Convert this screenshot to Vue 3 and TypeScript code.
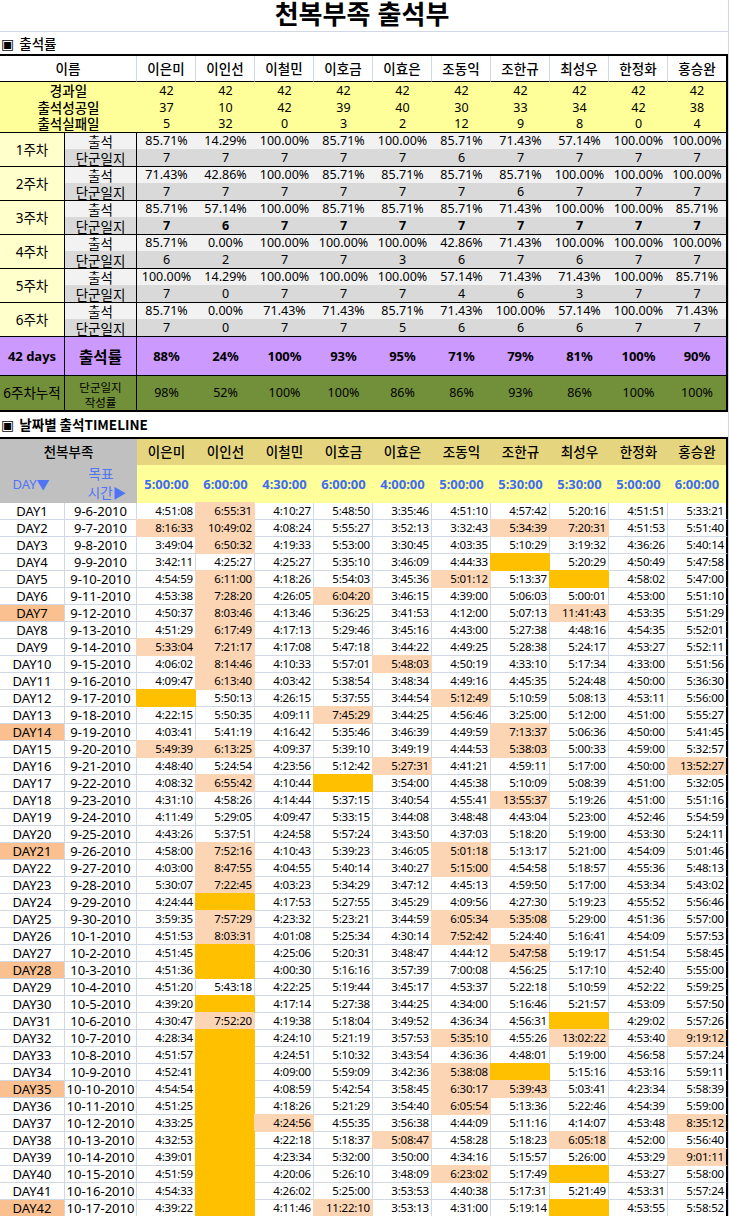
<script setup lang="ts">
interface Week { label: string; rate: string[]; days: string[]; bold?: boolean }
interface TimeCell { text: string; kind: string }
interface DayRow { day: string; date: string; rest: boolean; cells: TimeCell[] }

const names: string[] = ['이은미', '이인선', '이철민', '이호금', '이효은', '조동익', '조한규', '최성우', '한정화', '홍승완']
const elapsed: string[] = names.map(() => '42')
const success: string[] = ['37', '10', '42', '39', '40', '30', '33', '34', '42', '38']
const failed: string[] = ['5', '32', '0', '3', '2', '12', '9', '8', '0', '4']
const yellowRows = [
  { label: '경과일', values: elapsed },
  { label: '출석성공일', values: success },
  { label: '출석실패일', values: failed },
]
const pct = (s: string): string[] => s.split(' ').map((v) => (v === '100' ? '100.00%' : v + '%'))
const weeks: Week[] = [
  { label: '1주차', rate: pct('85.71 14.29 100 85.71 100 85.71 71.43 57.14 100 100'), days: '7 7 7 7 7 6 7 7 7 7'.split(' ') },
  { label: '2주차', rate: pct('71.43 42.86 100 85.71 85.71 85.71 85.71 100 100 100'), days: '7 7 7 7 7 7 6 7 7 7'.split(' ') },
  { label: '3주차', rate: pct('85.71 57.14 100 85.71 85.71 85.71 71.43 100 100 85.71'), days: '7 6 7 7 7 7 7 7 7 7'.split(' '), bold: true },
  { label: '4주차', rate: pct('85.71 0.00 100 100 100 42.86 71.43 100 100 100'), days: '6 2 7 7 3 6 7 6 7 7'.split(' ') },
  { label: '5주차', rate: pct('100 14.29 100 100 100 57.14 71.43 71.43 100 85.71'), days: '7 0 7 7 7 4 6 3 7 7'.split(' ') },
  { label: '6주차', rate: pct('85.71 0.00 71.43 71.43 85.71 71.43 100 57.14 100 71.43'), days: '7 0 7 7 5 6 6 6 7 7'.split(' ') },
]
const totals: string[] = ['88%', '24%', '100%', '93%', '95%', '71%', '79%', '81%', '100%', '90%']
const logs: string[] = ['98%', '52%', '100%', '100%', '86%', '86%', '93%', '86%', '100%', '100%']
const targets: string[] = ['5:00:00', '6:00:00', '4:30:00', '6:00:00', '4:00:00', '5:00:00', '5:30:00', '5:30:00', '5:00:00', '6:00:00']

const raw: string = `4:51:08 *6:55:31 4:10:27 5:48:50 3:35:46 4:51:10 4:57:42 5:20:16 4:51:51 5:33:21
*8:16:33 *10:49:02 4:08:24 5:55:27 3:52:13 3:32:43 *5:34:39 *7:20:31 4:51:53 5:51:40
3:49:04 *6:50:32 4:19:33 5:53:00 3:30:45 4:03:35 5:10:29 3:19:32 4:36:26 5:40:14
3:42:11 4:25:27 4:25:27 5:35:10 3:46:09 4:44:33 - 5:20:29 4:50:49 5:47:58
4:54:59 *6:11:00 4:18:26 5:54:03 3:45:36 *5:01:12 5:13:37 - 4:58:02 5:47:00
4:53:38 *7:28:20 4:26:05 *6:04:20 3:46:15 4:39:00 5:06:03 5:00:01 4:53:00 5:51:10
4:50:37 *8:03:46 4:13:46 5:36:25 3:41:53 4:12:00 5:07:13 *11:41:43 4:53:35 5:51:29
4:51:29 *6:17:49 4:17:13 5:29:46 3:45:16 4:43:00 5:27:38 4:48:16 4:54:35 5:52:01
*5:33:04 *7:21:17 4:17:08 5:47:18 3:44:22 4:49:25 5:28:38 5:24:17 4:53:27 5:52:11
4:06:02 *8:14:46 4:10:33 5:57:01 *5:48:03 4:50:19 4:33:10 5:17:34 4:33:00 5:51:56
4:09:47 *6:13:40 4:03:42 5:38:54 3:48:34 4:49:16 4:45:35 5:24:48 4:50:00 5:36:30
- 5:50:13 4:26:15 5:37:55 3:44:54 *5:12:49 5:10:59 5:08:13 4:53:11 5:56:00
4:22:15 5:50:35 4:09:11 *7:45:29 3:44:25 4:56:46 3:25:00 5:12:00 4:51:00 5:55:27
4:03:41 5:41:19 4:16:42 5:35:46 3:46:39 4:49:59 *7:13:37 5:06:36 4:50:00 5:41:45
*5:49:39 *6:13:25 4:09:37 5:39:10 3:49:19 4:44:53 *5:38:03 5:00:33 4:59:00 5:32:57
4:48:40 5:24:54 4:23:56 5:12:42 *5:27:31 4:41:21 4:59:11 5:17:00 4:50:00 *13:52:27
4:08:32 *6:55:42 4:10:44 - 3:54:00 4:45:38 5:10:09 5:08:39 4:51:00 5:32:05
4:31:10 4:58:26 4:14:44 5:37:15 3:40:54 4:55:41 *13:55:37 5:19:26 4:51:00 5:51:16
4:11:49 5:29:05 4:09:47 5:33:15 3:44:08 3:48:48 4:43:04 5:23:00 4:52:46 5:54:59
4:43:26 5:37:51 4:24:58 5:57:24 3:43:50 4:37:03 5:18:20 5:19:00 4:53:30 5:24:11
4:58:00 *7:52:16 4:10:43 5:39:23 3:46:05 *5:01:18 5:13:17 5:21:00 4:54:09 5:01:46
4:03:00 *8:47:55 4:04:55 5:40:14 3:40:27 *5:15:00 4:54:58 5:18:57 4:55:36 5:48:13
5:30:07 *7:22:45 4:03:23 5:34:29 3:47:12 4:45:13 4:59:50 5:17:00 4:53:34 5:43:02
4:24:44 - 4:17:53 5:27:55 3:45:29 4:09:56 4:27:30 5:19:23 4:55:52 5:56:46
3:59:35 *7:57:29 4:23:32 5:23:21 3:44:59 *6:05:34 *5:35:08 5:29:00 4:51:36 5:57:00
4:51:53 *8:03:31 4:01:08 5:25:34 4:30:14 *7:52:42 5:24:40 5:16:41 4:54:09 5:57:53
4:51:45 - 4:25:06 5:20:31 3:48:47 4:44:12 *5:47:58 5:19:17 4:51:54 5:58:45
4:51:36 - 4:00:30 5:16:16 3:57:39 7:00:08 4:56:25 5:17:10 4:52:40 5:55:00
4:51:20 5:43:18 4:22:25 5:19:44 3:45:17 4:53:37 5:22:18 5:10:59 4:52:22 5:59:25
4:39:20 - 4:17:14 5:27:38 3:44:25 4:34:00 5:16:46 5:21:57 4:53:09 5:57:50
4:30:47 *7:52:20 4:19:38 5:18:04 3:49:52 4:36:34 4:56:31 - 4:29:02 5:57:26
4:28:34 - 4:24:10 5:21:19 3:57:53 *5:35:10 4:55:26 *13:02:22 4:53:40 *9:19:12
4:51:57 - 4:24:51 5:10:32 3:43:54 4:36:36 4:48:01 5:19:00 4:56:58 5:57:24
4:52:41 - 4:09:00 5:59:09 3:42:36 *5:38:08 - 5:15:16 4:53:16 5:59:11
4:54:54 - 4:08:59 5:42:54 3:58:45 *6:30:17 *5:39:43 5:03:41 4:23:34 5:58:39
4:51:25 - 4:18:26 5:21:29 3:54:40 *6:05:54 5:13:36 5:22:46 4:54:39 5:59:00
4:33:25 - *4:24:56 4:55:35 3:56:38 4:44:09 5:11:16 4:14:07 4:53:48 *8:35:12
4:32:53 - 4:22:18 5:18:37 *5:08:47 4:58:28 5:18:23 *6:05:18 4:52:00 5:56:40
4:39:01 - 4:23:34 5:32:00 3:50:00 4:34:16 5:15:57 5:26:00 4:53:29 *9:01:11
4:51:59 - 4:20:06 5:26:10 3:48:09 *6:23:02 5:17:49 - 4:53:27 5:58:00
4:54:33 - 4:26:02 5:25:00 3:53:53 4:40:38 5:17:31 5:21:49 4:53:31 5:57:24
4:39:22 - 4:11:46 *11:22:10 3:53:13 4:31:00 5:19:14 - 4:53:55 5:58:52`

const dateOf = (i: number): string => (i < 25 ? `9-${i + 6}-2010` : `10-${i - 24}-2010`)
const parseCell = (s: string): TimeCell => {
  if (s === '-') return { text: '', kind: 'missed' }
  if (s.startsWith('*')) return { text: s.slice(1), kind: 'late' }
  return { text: s, kind: '' }
}
const rows: DayRow[] = raw.split('\n').map((line, i) => ({
  day: `DAY${i + 1}`,
  date: dateOf(i),
  rest: (i + 1) % 7 === 0,
  cells: line.trim().split(' ').map(parseCell),
}))
</script>

<template>
  <div class="sheet">
    <h1 class="title">천복부족 출석부</h1>
    <h2 class="section"><span class="mark">▣</span> 출석률</h2>

    <table class="grid summary">
      <colgroup>
        <col class="c-a" /><col class="c-b" />
        <col v-for="n in names" :key="n" class="c-n" />
      </colgroup>
      <tbody>
        <tr class="r-head">
          <td colspan="2" class="name">이름</td>
          <td v-for="n in names" :key="n" class="name">{{ n }}</td>
        </tr>
        <tr v-for="(y, yi) in yellowRows" :key="y.label" class="r-y" :class="{ end: yi === 2 }">
          <td colspan="2" class="ylabel">{{ y.label }}</td>
          <td v-for="(v, i) in y.values" :key="i" class="num">{{ v }}</td>
        </tr>
        <template v-for="w in weeks" :key="w.label">
          <tr class="r-rate">
            <td rowspan="2" class="wk">{{ w.label }}</td>
            <td class="sub">출석</td>
            <td v-for="(v, i) in w.rate" :key="i" class="num">{{ v }}</td>
          </tr>
          <tr class="r-days" :class="{ strong: w.bold }">
            <td class="sub">단군일지</td>
            <td v-for="(v, i) in w.days" :key="i" class="num">{{ v }}</td>
          </tr>
        </template>
        <tr class="r-total">
          <td class="total-a">42 days</td>
          <td class="total-b">출석률</td>
          <td v-for="(v, i) in totals" :key="i" class="num">{{ v }}</td>
        </tr>
        <tr class="r-log">
          <td class="log-a">6주차누적</td>
          <td class="log-b">단군일지<br />작성률</td>
          <td v-for="(v, i) in logs" :key="i" class="num">{{ v }}</td>
        </tr>
      </tbody>
    </table>

    <h2 class="section second"><span class="mark">▣</span> 날짜별 출석TIMELINE</h2>

    <table class="grid timeline">
      <colgroup>
        <col class="c-a" /><col class="c-b" />
        <col v-for="n in names" :key="n" class="c-n" />
      </colgroup>
      <tbody>
        <tr class="t-head">
          <td colspan="2" class="clan">천복부족</td>
          <td v-for="n in names" :key="n" class="name">{{ n }}</td>
        </tr>
        <tr class="t-goal">
          <td class="gray blue day-label">DAY▼</td>
          <td class="gray blue goal-label">목표<br /><span class="goal-time">시간▶</span></td>
          <td v-for="(t, i) in targets" :key="i" class="goal">{{ t }}</td>
        </tr>
        <tr v-for="r in rows" :key="r.day" class="t-row">
          <td class="day" :class="{ rest: r.rest }">{{ r.day }}</td>
          <td class="date">{{ r.date }}</td>
          <td v-for="(c, i) in r.cells" :key="i" class="time" :class="c.kind">{{ c.text }}</td>
        </tr>
      </tbody>
    </table>
  </div>
</template>

<style>
html, body { margin: 0; background: #fff; }
</style>

<style scoped>
.sheet {
  width: 729px;
  height: 1216px;
  overflow: hidden;
  box-sizing: border-box;
  border-right: 1px solid #d0d7e5;
  font-family: "Noto Sans", "Noto Sans CJK KR", sans-serif;
  color: #000;
  background: #fff;
}
.title {
  margin: 0;
  height: 32px;
  box-sizing: border-box;
  border-bottom: 1px solid #d0d7e5;
  font-family: "Liberation Sans", "Noto Sans CJK KR", sans-serif;
  font-size: 26px;
  font-weight: 700;
  line-height: 30px;
  text-align: center;
  padding-right: 4px;
}
.section {
  margin: 0;
  height: 22px;
  padding-left: 1px;
  font-family: "Noto Sans CJK KR", sans-serif;
  font-size: 13.5px;
  font-weight: 500;
  line-height: 22px;
  white-space: nowrap;
}
.section.second { height: 25px; line-height: 25px; font-weight: 700; }
.mark { font-family: "DejaVu Sans", sans-serif; font-size: 14px; font-weight: 400; margin-right: 2px; }

.grid {
  width: 728px;
  table-layout: fixed;
  border-collapse: separate;
  border-spacing: 0;
  border-top: 2px solid #000;
}
.c-a { width: 65px; }
.c-b { width: 72px; }
.c-n { width: 59px; }
.c-n:last-child { width: 60px; }
.grid td {
  box-sizing: border-box;
  padding: 0;
  text-align: center;
  vertical-align: middle;
  font-size: 12.5px;
  line-height: 16px;
  white-space: nowrap;
}
.grid tr td:last-child { border-right: 2px solid #000; }

.name { font-size: 13.5px !important; font-weight: 500; }
.r-head td { height: 26px; border-right: 1px solid #d0d7e5; border-bottom: 1px solid #000; }

.r-y td { height: 17px; background: #ffff99; }
.r-y.end td { border-bottom: 1px solid #000; }
.ylabel { font-size: 13.5px !important; font-weight: 500; }

.r-rate td.num { height: 16px; background: #f2f2f2; }
.r-days td.num { height: 18px; background: #d9d9d9; vertical-align: bottom; border-bottom: 1px solid #000; }
.r-days.strong td.num { font-weight: 700; }
.r-total td, .r-log td { border-bottom: 1px solid #000; }
.sub {
  font-size: 13.5px !important;
  border-right: 1px solid #000;
}
.r-rate .sub { height: 16px; background: #f2f2f2; padding-top: 3px; line-height: 13px; }
.r-days .sub { height: 18px; background: #d9d9d9; padding-top: 3px; line-height: 14px; border-bottom: 1px solid #000; }
.wk {
  background: #ffffcc;
  font-size: 13.5px !important;
  border-right: 1px solid #000;
  border-bottom: 1px solid #000;
}

.r-total td { height: 39px; background: #cc99ff; }
.r-total .num { font-size: 13px; font-weight: 700; }
.total-a { font-size: 13px !important; font-weight: 700; border-right: 1px solid #000; }
.total-b { font-family: "Noto Sans CJK KR", sans-serif; font-size: 15.5px !important; font-weight: 700; border-right: 1px solid #000; }

.r-log td { height: 36px; background: #728f3a; border-bottom-width: 2px; }
.log-a { font-size: 13.5px !important; border-right: 1px solid #000; letter-spacing: 0; }
.log-b { font-size: 11.5px !important; line-height: 15px !important; padding-top: 3px !important; border-right: 1px solid #000; }

.t-head td { height: 26px; background: #e6d57f; }
.t-head .clan { background: #c0c0c0; font-size: 13.5px; font-weight: 500; }
.t-goal td { height: 38px; background: #ffff99; }
.t-goal .gray { background: #c0c0c0; }
.blue { color: #4f74f5; font-size: 13px !important; }
.day-label { padding-right: 3px !important; }
.goal-label { line-height: 19px !important; font-size: 13.5px !important; }
.goal-time { padding-left: 12px; }
.goal { color: #3e6cf0; font-size: 13px !important; font-weight: 700; }

.t-row td {
  height: 17px;
  border-right: 1px solid #d0d7e5;
  border-bottom: 1px solid #d0d7e5;
}
.day, .date { font-size: 13px !important; }
.day.rest { background: #fac090; }
.time {
  text-align: right !important;
  padding-right: 2px !important;
  font-size: 11.5px !important;
  letter-spacing: -0.2px;
}
.time.late {
  background: #fcd5b4;
  border-color: #fcd5b4 !important;
  box-shadow: -1px -1px 0 #fcd5b4;
}
.time.missed {
  background: #ffc000;
  border-color: #ffc000 !important;
  box-shadow: -1px -1px 0 #ffc000;
}
.t-row td.time:last-child { border-right-color: #000 !important; }
</style>
